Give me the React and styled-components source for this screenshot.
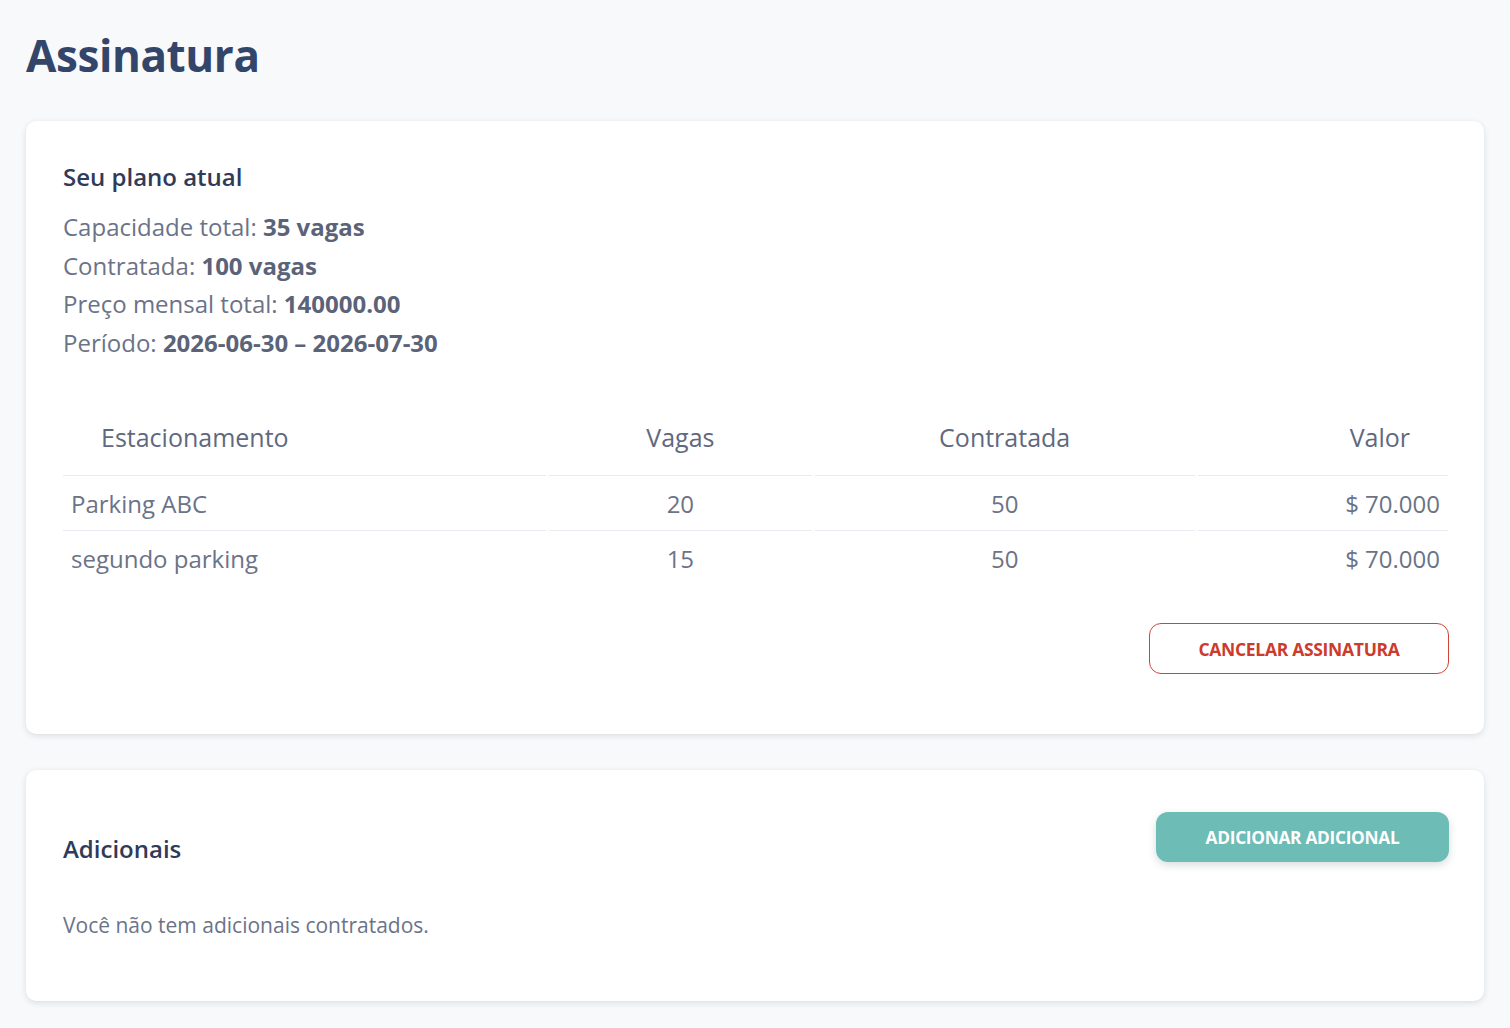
import React from "react";
import styled, { createGlobalStyle } from "styled-components";

const Global = createGlobalStyle`
  html, body { margin: 0; padding: 0; background: #f7f9fb; }
  body { font-family: "Open Sans", "Noto Sans", sans-serif; -webkit-font-smoothing: antialiased; }
  * { box-sizing: border-box; }
`;

const Page = styled.div`
  padding: 26px;
  display: flex;
  flex-direction: column;
  gap: 36px;
`;

const Title = styled.h1`
  margin: 0 0 1px 0;
  font-size: 44px;
  line-height: 58px;
  font-weight: 700;
  color: #34456a;
  letter-spacing: -0.4px;
`;

const Card = styled.section`
  background: #fff;
  border-radius: 10px;
  box-shadow: 0 2px 6px rgba(30, 40, 60, 0.12), 0 0 1px rgba(30, 40, 60, 0.06);
  padding: ${(p) => p.$pad || "40px 36px 60px 37px"};
`;

const SectionTitle = styled.h2`
  margin: 0;
  font-size: 24px;
  line-height: 32px;
  font-weight: 600;
  color: #2f3b57;
`;

const InfoList = styled.div`
  margin-top: 15px;
  display: flex;
  flex-direction: column;
`;

const InfoLine = styled.div`
  font-size: 24px;
  line-height: 38.5px;
  color: #6b7387;
  b { font-weight: 700; color: #5a6378; }
`;

const Table = styled.table`
  margin-top: 41px;
  border-collapse: separate;
  border-spacing: 3px 0;
  margin-left: -3px;
  width: calc(100% + 6px);
  table-layout: fixed;
`;

const Th = styled.th`
  font-size: 25px;
  font-weight: 500;
  color: #5f6980;
  height: 73px;
  padding: 0 38px 4px;
  text-align: ${(p) => p.$align || "left"};
  border-bottom: 1px solid #e8ebef;
  vertical-align: middle;
`;

const Td = styled.td`
  font-size: 24px;
  color: #6b7387;
  height: 55px;
  padding: 0 8px;
  text-align: ${(p) => p.$align || "left"};
  border-bottom: ${(p) => (p.$last ? "none" : "1px solid #e8ebef")};
`;

const Actions = styled.div`
  display: flex;
  justify-content: flex-end;
  margin-top: 37px;
  margin-right: -1px;
`;

const OutlineButton = styled.button`
  height: 51px;
  width: 300px;
  border: 1px solid #d04436;
  border-radius: 12px;
  background: #fff;
  color: #cc3b2c;
  font-family: inherit;
  font-size: 17.5px;
  font-weight: 700;
  letter-spacing: -0.3px;
  text-transform: uppercase;
  cursor: pointer;
`;

const Header = styled.div`
  display: flex;
  justify-content: space-between;
  align-items: flex-start;
`;

const AddonTitle = styled(SectionTitle)`
  margin-top: 21px;
`;

const FilledButton = styled.button`
  height: 50px;
  width: 293px;
  margin-right: -1px;
  border: none;
  border-radius: 12px;
  background: #6dbcb5;
  color: #fff;
  font-family: inherit;
  font-size: 17.3px;
  font-weight: 700;
  letter-spacing: -0.3px;
  text-transform: uppercase;
  box-shadow: 0 3px 8px rgba(40, 60, 70, 0.18);
  cursor: pointer;
`;

const Empty = styled.p`
  margin: 46px 0 0 0;
  font-size: 21px;
  line-height: 28px;
  color: #6b7387;
`;

const rows = [
  { name: "Parking ABC", vagas: 20, contratada: 50, valor: "$ 70.000" },
  { name: "segundo parking", vagas: 15, contratada: 50, valor: "$ 70.000" },
];

export default function App() {
  return (
    <>
      <Global />
      <Page>
        <Title>Assinatura</Title>
        <Card>
          <SectionTitle>Seu plano atual</SectionTitle>
          <InfoList>
            <InfoLine>Capacidade total: <b>35 vagas</b></InfoLine>
            <InfoLine>Contratada: <b>100 vagas</b></InfoLine>
            <InfoLine>Preço mensal total: <b>140000.00</b></InfoLine>
            <InfoLine>Período: <b>2026-06-30 – 2026-07-30</b></InfoLine>
          </InfoList>
          <Table>
            <colgroup>
              <col style={{ width: "35.1%" }} />
              <col style={{ width: "19.1%" }} />
              <col style={{ width: "27.6%" }} />
              <col style={{ width: "18.2%" }} />
            </colgroup>
            <thead>
              <tr>
                <Th>Estacionamento</Th>
                <Th $align="center">Vagas</Th>
                <Th $align="center">Contratada</Th>
                <Th $align="right">Valor</Th>
              </tr>
            </thead>
            <tbody>
              {rows.map((r, i) => {
                const last = i === rows.length - 1;
                return (
                  <tr key={r.name}>
                    <Td $last={last}>{r.name}</Td>
                    <Td $last={last} $align="center">{r.vagas}</Td>
                    <Td $last={last} $align="center">{r.contratada}</Td>
                    <Td $last={last} $align="right">{r.valor}</Td>
                  </tr>
                );
              })}
            </tbody>
          </Table>
          <Actions>
            <OutlineButton>Cancelar assinatura</OutlineButton>
          </Actions>
        </Card>
        <Card $pad="42px 36px 62px 37px">
          <Header>
            <AddonTitle>Adicionais</AddonTitle>
            <FilledButton>Adicionar adicional</FilledButton>
          </Header>
          <Empty>Você não tem adicionais contratados.</Empty>
        </Card>
      </Page>
    </>
  );
}
